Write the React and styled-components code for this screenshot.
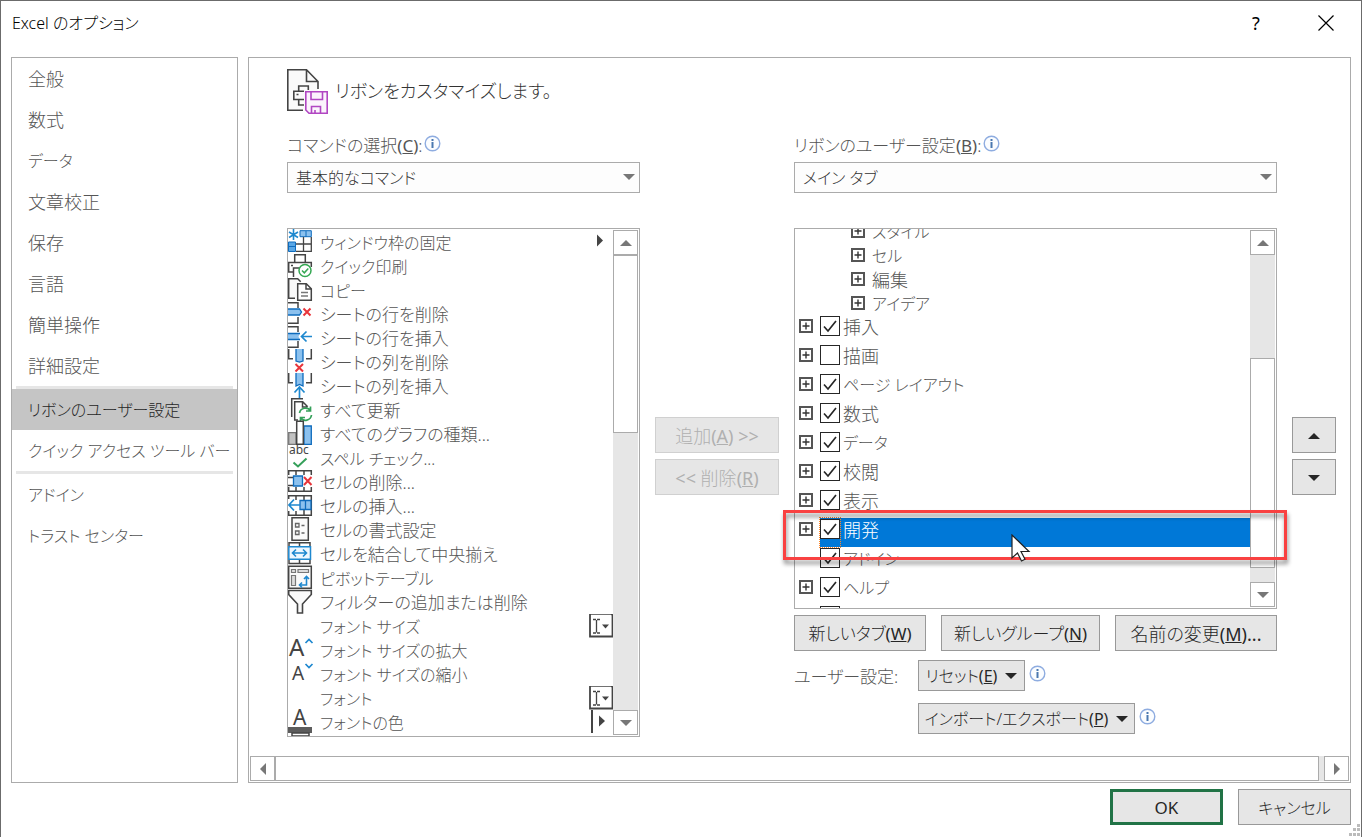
import React from "react";
import styled, { createGlobalStyle, css } from "styled-components";

const GlobalStyle = createGlobalStyle`
  *, *::before, *::after { box-sizing: border-box; }
  body {
    margin: 0;
    background: #fff;
    color: #555;
    font-family: "Noto Sans", "Noto Sans CJK JP", sans-serif;
    font-size: 17px;
    font-weight: 300;
    line-height: 26px;
    font-feature-settings: "palt";
  }
  button, select, input { font: inherit; font-feature-settings: inherit; margin: 0; }
  ul { list-style: none; margin: 0; padding: 0; }
  svg { display: block; flex: none; }
`;

const Dialog = styled.div`
  position: relative;
  display: flex;
  flex-direction: column;
  min-height: 100vh;
  padding: 0 10px 12px;
  border: 1px solid #6b6b6b;
  border-bottom: 0;
`;

const TitleBar = styled.header`
  display: flex;
  align-items: center;
  height: 56px;
  padding: 0 13px 12px 1px;
  color: #000;
`;

const Title = styled.h1`
  flex: 1;
  margin: 0;
  font-size: 16px;
  font-weight: 300;
`;

const TitleButton = styled.button`
  display: grid;
  place-items: center;
  width: 24px;
  height: 32px;
  margin-left: 46px;
  padding: 0;
  border: 0;
  background: none;
  color: #000;
  font-size: 18px;
  font-weight: 400;
`;

const Body = styled.div`
  display: flex;
  flex: 1;
  gap: 10px;
`;

const Nav = styled.nav`
  flex: none;
  width: 227px;
  border: 1px solid #ababab;
`;

const NavLink = styled.a`
  display: block;
  padding: 8px 0 7px 16px;
  color: ${(p) => (p.$active ? "#262626" : "#555")};
  background: ${(p) => (p.$active ? "#c5c5c5" : "none")};
  font-size: ${(p) => p.$size}px;
  text-decoration: none;
  white-space: nowrap;
`;

const NavDivider = styled.hr`
  height: 3px;
  margin: 0 4px;
  border: 0;
  background: #e6e6e6;
`;

const Panel = styled.main`
  display: flex;
  flex: 1;
  flex-direction: column;
  min-width: 0;
  padding: 0 1px 1px;
  border: 1px solid #ababab;
`;

const PanelContent = styled.div`
  flex: 1;
  padding: 10px 13px 19px 37px;
`;

const Heading = styled.div`
  display: flex;
  align-items: center;
  gap: 7px;
  height: 46px;
`;

const HeadingText = styled.h2`
  margin: 0;
  color: #333;
  font-size: 18px;
  font-weight: 300;
`;

const Columns = styled.div`
  display: grid;
  grid-template-columns: minmax(0, 353fr) 124px minmax(0, 483fr) 44px;
  gap: 15px;
  margin-top: 18px;
`;

const Column = styled.div`
  display: flex;
  flex-direction: column;
`;

const SideButtons = styled(Column)`
  gap: 6px;
  padding-top: 285px;
`;

const FieldLabel = styled.div`
  display: flex;
  gap: 2px;
  height: 30px;
  padding-top: 2px;
  line-height: 24px;

  svg { margin-top: 1px; }
`;

const SelectBox = styled.div`
  position: relative;
  height: 31px;
  margin-bottom: 35px;

  svg {
    position: absolute;
    top: 12px;
    right: 5px;
    pointer-events: none;
  }
`;

const Select = styled.select`
  width: 100%;
  height: 31px;
  padding: 1px 24px 0 8px;
  appearance: none;
  border: 1px solid #ababab;
  border-radius: 0;
  background: #fdfdfd;
  color: #333;
  font-size: 16px;
`;

const ListFrame = styled.div`
  position: relative;
  display: flex;
  height: ${(p) => p.$height}px;
  padding: 1px;
  border: 1px solid #ababab;
`;

const ListClip = styled.div`
  flex: 1;
  min-width: 0;
  margin: -1px 0 -1px -1px;
  overflow: hidden;
`;

const CommandList = styled.ul`
  padding-top: 1px;
`;

const CommandRow = styled.li`
  display: flex;
  height: 24px;
  font-size: ${(p) => p.$size}px;
  white-space: nowrap;
`;

const CommandIcon = styled.span`
  width: 24px;
  height: 24px;
  margin-right: 8px;

  svg { overflow: visible; }
`;

const CommandName = styled.span`
  flex: 1;
`;

const Scrollbar = styled.div`
  display: flex;
  flex-direction: ${(p) => (p.$horizontal ? "row" : "column")};
  flex: none;
  ${(p) => (p.$horizontal ? "height: 25px;" : "width: 25px;")}
  background: #e6e6e6;
`;

const ScrollButton = styled.button`
  display: grid;
  place-items: center;
  flex: none;
  width: 25px;
  height: 25px;
  padding: 0;
  border: 1px solid #ababab;
  background: #fff;
`;

const ScrollThumb = styled.div`
  flex: ${(p) => p.$size} 1 0;
  border: 1px solid #ababab;
  background: #fff;
`;

const ScrollSpace = styled.div`
  flex: ${(p) => p.$size} 1 0;
`;

const Button = styled.button`
  display: flex;
  align-items: center;
  justify-content: center;
  flex: none;
  gap: 8px;
  width: ${(p) => p.$width || "auto"};
  height: ${(p) => (p.$compact ? 31 : 36)}px;
  padding: 1px 0 0;
  border: 1px solid #999;
  background: #e6e6e6;
  color: #262626;
  font-size: ${(p) => p.$size || 17}px;
  white-space: nowrap;

  &:disabled {
    border-color: #d0d0d0;
    color: #b0b0b0;
  }

  ${(p) =>
    p.$primary &&
    css`
      border: 3px solid #217346;
    `}
`;

const Latin = styled.span`
  font-weight: 400;
`;

const SubRow = styled.li`
  display: flex;
  align-items: center;
  gap: 7px;
  height: 24px;
  padding: 0 0 0 56px;
  font-size: ${(p) => p.$size}px;
`;

const SubName = styled.span`
  padding-top: 2px;
`;

const TreeList = styled.ul`
  margin-top: -10px;
`;

const TreeRow = styled.li`
  display: flex;
  height: 29px;
  padding-left: 4px;
  font-size: ${(p) => p.$size}px;
  line-height: 24px;
`;

const Expander = styled.button`
  display: block;
  width: 14px;
  height: 14px;
  margin-top: ${(p) => (p.$top ? 4 : 0)}px;
  padding: 0;
  border: 2px solid #555;
  background: #fff;
  visibility: ${(p) => (p.$hidden ? "hidden" : "visible")};
`;

const TabLabel = styled.label`
  display: flex;
  flex: 1;
  gap: 3px;
  margin-left: 7px;
  background: ${(p) => (p.$selected ? "#0078d7" : "none")};
  color: ${(p) => (p.$selected ? "#fff" : "#555")};
`;

const CheckCell = styled.span`
  display: grid;
  align-content: start;
  width: 20px;
  padding-top: 1px;
  outline: ${(p) => (p.$selected ? "1px dotted #ff8728" : "none")};

  input, svg { grid-area: 1 / 1; }
  svg { visibility: hidden; pointer-events: none; }
  input:checked + svg { visibility: visible; }
`;

const Checkbox = styled.input`
  width: 20px;
  height: 20px;
  appearance: none;
  border: 1px solid #262626;
  background: #fff;
`;

const Callout = styled.div`
  position: absolute;
  top: 281px;
  right: -11px;
  left: -12px;
  height: 50px;
  border: 3px solid #f94141;
  filter: drop-shadow(1px 4px 2px rgba(0, 0, 0, 0.45));
  pointer-events: none;
`;

const Pointer = styled.svg`
  position: absolute;
  top: 305px;
  left: 45%;
  pointer-events: none;
`;

const ButtonRow = styled.div`
  display: flex;
  justify-content: space-between;
  margin-top: 6px;
`;

const Customizations = styled.div`
  display: grid;
  grid-template-columns: 109px 1fr;
  gap: 12px 15px;
  margin-top: 9px;
`;

const CustomLabel = styled.span`
  align-self: center;
  padding-top: 2px;
  white-space: nowrap;
`;

const WithInfo = styled.div`
  display: flex;
  gap: 4px;

  > svg { margin-top: 5px; }
`;

const Footer = styled.footer`
  display: flex;
  justify-content: flex-end;
  gap: 15px;
  padding-top: 6px;
`;

const Grip = styled.svg`
  position: absolute;
  right: 1px;
  bottom: 1px;
`;

function textSize(text) {
  const katakana = (text.match(/[ァ-ヺー]/g) || []).length / (text.length || 1);
  if (!/[ぁ-ヺー]/.test(text)) return 18;
  return katakana > 0.5 ? 16 : 17;
}

function Triangle({ dir = "down", color = "#777", w = 12, h = 6 }) {
  const shapes = {
    down: `0,0 ${w},0 ${w / 2},${h}`,
    up: `0,${h} ${w},${h} ${w / 2},0`,
    right: `0,0 ${w},${h / 2} 0,${h}`,
    left: `${w},0 ${w},${h} 0,${h / 2}`,
  };
  return (
    <svg width={w} height={h} aria-hidden="true">
      <polygon points={shapes[dir]} fill={color} />
    </svg>
  );
}

function Info() {
  return (
    <svg width="17" height="17" viewBox="0 0 17 17" aria-hidden="true">
      <circle cx="8.5" cy="8.5" r="7.3" fill="#fbfdff" stroke="#8eace0" strokeWidth="1.400" />
      <path d="M7.500 4h2v2h-2zM7.500 7h2v6h-2z" fill="#4a78b0" />
    </svg>
  );
}

const D = "#444";
const B = "#1e88cf";
const L = "#8cc1ee";

const drawings = {
  freeze: (
    <>
      <path d="M12 .7h11.3v6H12z" fill={L} stroke="#0f6cbd" />
      <path d="M.5 12h7v9.500h-7z" fill="#5aa7e6" stroke="#0f6cbd" />
      <path d="M.5 16.500h7M18 1v6" stroke="#0f6cbd" />
      <path d="M8 21.300h15.300V7M8 14h15M15.500 7v14" fill="none" stroke={D} strokeWidth="1.300" />
      <path d="M5.500-1v11M1 2l9 5.500M10 2 1 7.500" stroke={B} strokeWidth="1.600" />
    </>
  ),
  print: (
    <>
      <path d="M6.700 8V.7h10.600V8M5 18H.7V8.500h22.600V13M3 11.500h2M5.500 23v-9H12" fill="none" stroke={D} strokeWidth="1.500" />
      <circle cx="17" cy="16.500" r="6" fill="#fff" stroke="#35a853" strokeWidth="1.500" />
      <path d="m14 16.500 2.300 2.300 4-4.300" fill="none" stroke="#35a853" strokeWidth="1.500" />
    </>
  ),
  copy: (
    <>
      <path d="M7 20.300H.7V.7h9l3 3" fill="#fafafa" stroke={D} strokeWidth="1.500" />
      <path d="M9.700 5.700h8.600l5 5v11.600H9.700zM18 5.700V11h5" fill="#fff" stroke={D} strokeWidth="1.500" />
      <path d="M13 14.500h7M13 18h7" stroke="#777" strokeWidth="1.300" />
    </>
  ),
  rowDelete: (
    <>
      <path d="M0 .7h10V6M0 21.300h10V15" fill="none" stroke={D} strokeWidth="1.500" />
      <path d="M0 7h11.500l2 3-2 3H0z" fill={L} />
      <path d="M0 7h11.500l2 3-2 3H0" fill="none" stroke="#0f6cbd" strokeWidth="1.300" />
      <path d="m15.500 6.500 7 7m0-7-7 7" stroke="#e8353b" strokeWidth="2" />
    </>
  ),
  rowInsert: (
    <>
      <path d="M0 .7h10V6M0 21.300h10V15" fill="none" stroke={D} strokeWidth="1.500" />
      <path d="M0 7h12l-1.500 3.500L12 14H0z" fill={L} />
      <path d="M0 7.500h12M0 13.500h12" stroke="#0f6cbd" strokeWidth="1.300" />
      <path d="M24 10.500H14m4.500-5-5 5 5 5" fill="none" stroke={B} strokeWidth="1.700" />
    </>
  ),
  colDelete: (
    <>
      <path d="M.7-1v9.700H5M23.300-1v9.700H18" fill="none" stroke={D} strokeWidth="1.500" />
      <path d="M8-1v12l3.500 1 3.500-1V-1" fill={L} stroke="#0f6cbd" strokeWidth="1.300" />
      <path d="m7.500 14 7.500 7.500m0-7.500-7.500 7.500" stroke="#e8353b" strokeWidth="2" />
    </>
  ),
  colInsert: (
    <>
      <path d="M.7-1v9.700H5M23.300-1v9.700H18" fill="none" stroke={D} strokeWidth="1.500" />
      <path d="M8-1v13l3.500-1.500L15 12V-1" fill={L} stroke="#0f6cbd" strokeWidth="1.300" />
      <path d="M11.500 24V13m-5 5.500 5-5.500 5 5.500" fill="none" stroke={B} strokeWidth="1.700" />
    </>
  ),
  refresh: (
    <>
      <path d="M3.700 19V.7H15" fill="none" stroke={D} strokeWidth="1.500" />
      <path d="M10 22H6.700V3.700h8l5 5M14.500 4v5h5" fill="none" stroke={D} strokeWidth="1.500" />
      <path d="M11.500 15a6 6 0 0 1 11-2M22.500 8.500V13H18M23.500 17a6 6 0 0 1-11 2.500M12.500 24v-4.500H17" fill="none" stroke="#35a05a" strokeWidth="1.700" />
    </>
  ),
  chart: (
    <>
      <path d="M.7 10.700H8v11.600H.7z" fill="#c2c2c2" stroke="#777" strokeWidth="1.300" />
      <path d="M16 4h7.300v18.300H16z" fill={L} stroke="#0f6cbd" strokeWidth="1.300" />
      <path d="M8.700-.7h6.600v23H8.700z" fill="#fff" stroke={D} strokeWidth="1.500" />
    </>
  ),
  spell: (
    <>
      <text x="1" y="8" fontSize="12" fontWeight="400" fill={D}>abc</text>
      <path d="m5.500 16.500 4.500 4 8.500-8" fill="none" stroke="#35a05a" strokeWidth="2" />
    </>
  ),
  cellDelete: (
    <>
      <path d="M.7 5V.7h22.600V5M8 1v4M16 1v4M.7 17v4.300h22.600V17M8 17v4M16 17v4" fill="none" stroke={D} strokeWidth="1.500" />
      <path d="M0 7.500h5M0 15.500h5" stroke={D} strokeWidth="1.500" />
      <path d="M5.500 6h9v10h-9z" fill={L} stroke="#0f6cbd" strokeWidth="1.300" />
      <path d="m16 7 7.500 8m0-8L16 15" stroke="#e8353b" strokeWidth="2" />
    </>
  ),
  cellInsert: (
    <>
      <path d="M.7 5V1.700h22.600V21.300H.7V17M8 2v4M16 2v20M8 17v4" fill="none" stroke={D} strokeWidth="1.500" />
      <path d="M12 6.500h11v9H12zM17.500 6.500v9" fill={L} stroke="#0f6cbd" strokeWidth="1.300" />
      <path d="M12 11H1m5-5.500L1 11l5 5.500" fill="none" stroke={B} strokeWidth="1.700" />
    </>
  ),
  format: (
    <>
      <path d="M4-.3h16.300v22.600H4z" fill="#fafafa" stroke={D} strokeWidth="1.500" />
      <path d="M7.500 5.500h3.500V9H7.500zM7.500 13h3.500v3.500H7.500zM13.500 7.500h3M13.500 15h3" fill="none" stroke="#666" strokeWidth="1.300" />
    </>
  ),
  merge: (
    <>
      <path d="M1 4V.7h21V4M11.500 0v4M1 18v3.500h21V18M11.500 18v4" fill="none" stroke={D} strokeWidth="1.500" />
      <path d="M.8 4.800h21.700v12.400H.8z" fill="#eef7ff" stroke={B} strokeWidth="1.500" />
      <path d="M4.500 11h14M8 7.500 4.500 11 8 14.500M15 7.500l3.500 3.500-3.500 3.500" fill="none" stroke={B} strokeWidth="1.600" />
    </>
  ),
  pivot: (
    <>
      <path d="M.7.2h22.600v22H.7z" fill="#fafafa" stroke={D} strokeWidth="1.500" />
      <path d="M3.500 3.500h4v3h-4zM10 3.500h10.500v3H10zM3.500 9.500h4v10h-4z" fill="#ddd" stroke="#777" strokeWidth="1.200" />
      <path d="M12 19h6.500v-8M14 16.500 11.500 19l2.500 2.500M16 13l2.500-2.500L21 13" fill="none" stroke={B} strokeWidth="1.600" />
    </>
  ),
  filter: (
    <path d="M.7.500h22.600v4L14.500 14v9h-5v-9L.7 4.500z" fill="#fafafa" stroke={D} strokeWidth="1.600" />
  ),
  grow: (
    <>
      <text x="1" y="18" fontSize="24" fontWeight="400" fill={D}>A</text>
      <path d="m17.500 5 3.500-3.500L24.500 5" fill="none" stroke={B} strokeWidth="1.700" />
    </>
  ),
  shrink: (
    <>
      <text x="4" y="18" fontSize="19" fontWeight="400" fill={D}>A</text>
      <path d="m17.500 2 3.500 3.500L24.500 2" fill="none" stroke={B} strokeWidth="1.700" />
    </>
  ),
  color: (
    <>
      <text x="5" y="15" fontSize="21" fontWeight="400" fill={D}>A</text>
      <path d="M0 17h24v6H0z" fill="#5c5c5c" />
      <path d="M4 23h17v3H4z" fill="#fff" stroke={D} strokeWidth="1.500" />
    </>
  ),
};

function FieldBadge() {
  return (
    <svg width="24" height="24" viewBox="0 0 24 24" aria-hidden="true">
      <path d="M1-.2h21L23.500 1v21.500H1z" fill="#fff" stroke={D} strokeWidth="1.800" />
      <path d="M4 5.500h3M8 5.500h3M7.500 6v12.500M4 19h3M8 19h3" stroke={D} strokeWidth="1.300" />
      <path d="M13 10.500h7l-3.500 4z" fill={D} />
    </svg>
  );
}

function SplitBadge() {
  return (
    <svg width="24" height="24" viewBox="0 0 24 24" aria-hidden="true">
      <path d="M3-1v24" stroke={D} strokeWidth="2" />
      <path d="m10 5.500 6 5.500-6 5.500z" fill={D} />
    </svg>
  );
}

function MenuBadge() {
  return (
    <svg width="24" height="24" viewBox="0 0 24 24" aria-hidden="true">
      <path d="m8 4.500 6 6-6 6z" fill={D} />
    </svg>
  );
}

const badges = { field: <FieldBadge />, split: <SplitBadge />, menu: <MenuBadge /> };

const commands = [
  ["freeze", "ウィンドウ枠の固定", "menu"],
  ["print", "クイック印刷"],
  ["copy", "コピー"],
  ["rowDelete", "シートの行を削除"],
  ["rowInsert", "シートの行を挿入"],
  ["colDelete", "シートの列を削除"],
  ["colInsert", "シートの列を挿入"],
  ["refresh", "すべて更新"],
  ["chart", "すべてのグラフの種類..."],
  ["spell", "スペル チェック..."],
  ["cellDelete", "セルの削除..."],
  ["cellInsert", "セルの挿入..."],
  ["format", "セルの書式設定"],
  ["merge", "セルを結合して中央揃え"],
  ["pivot", "ピボットテーブル"],
  ["filter", "フィルターの追加または削除"],
  [null, "フォント サイズ", "field"],
  ["grow", "フォント サイズの拡大"],
  ["shrink", "フォント サイズの縮小"],
  [null, "フォント", "field"],
  ["color", "フォントの色", "split"],
];

const groups = ["スタイル", "セル", "編集", "アイデア"];

const tabs = [
  { name: "挿入", checked: true },
  { name: "描画", checked: false },
  { name: "ページ レイアウト", checked: true },
  { name: "数式", checked: true },
  { name: "データ", checked: true },
  { name: "校閲", checked: true },
  { name: "表示", checked: true },
  { name: "開発", checked: true, selected: true },
  { name: "アドイン", checked: true, leaf: true },
  { name: "ヘルプ", checked: true },
  { name: "", checked: true, leaf: true },
];

const navGroups = [
  ["全般", "数式", "データ", "文章校正", "保存", "言語", "簡単操作", "詳細設定"],
  ["リボンのユーザー設定", "クイック アクセス ツール バー"],
  ["アドイン", "トラスト センター"],
];

function Access({ letter }) {
  return <Latin>(<u>{letter}</u>)</Latin>;
}

function PlusButton({ top, hidden, name }) {
  return (
    <Expander type="button" $top={top} $hidden={hidden} aria-label={`${name}を展開`}>
      <svg width="10" height="10" viewBox="0 0 10 10" aria-hidden="true">
        <path d="M1.500 5h7M5 1.500v7" stroke="#333" strokeWidth="1.400" />
      </svg>
    </Expander>
  );
}

function VerticalScroll({ before, thumb, after }) {
  return (
    <Scrollbar>
      <ScrollButton type="button" aria-label="上へスクロール"><Triangle dir="up" /></ScrollButton>
      {before > 0 && <ScrollSpace $size={before} />}
      <ScrollThumb $size={thumb} />
      <ScrollSpace $size={after} />
      <ScrollButton type="button" aria-label="下へスクロール"><Triangle /></ScrollButton>
    </Scrollbar>
  );
}

function Picker({ id, label, accessKey, value }) {
  return (
    <>
      <FieldLabel>
        <label htmlFor={id}>{label}<Access letter={accessKey} />:</label>
        <Info />
      </FieldLabel>
      <SelectBox>
        <Select id={id} defaultValue={value}>
          <option>{value}</option>
        </Select>
        <Triangle />
      </SelectBox>
    </>
  );
}

function RibbonIcon() {
  return (
    <svg width="41" height="46" viewBox="0 0 41 46" aria-hidden="true">
      <path d="M1 1.800h18.500L31 13v30H1z" fill="#fafafa" />
      <path d="M16 42.200H.8V1.800h18.700L31 13.500V21M19.500 2v11.500H31" fill="none" stroke={D} strokeWidth="1.600" />
      <path d="M17 31.500H6.800v-8.300H17M11.700 23v-5h9.600v4M11.700 31.500V37H17M9.500 26.500h2" fill="none" stroke={D} strokeWidth="1.600" />
      <path d="M18.800 23.800h21.400v21.400H22l-3.200-3.200z" fill="#fbf3fc" stroke="#b146c2" strokeWidth="1.600" />
      <path d="M24 24v7.500h11.500V24M24.500 45v-6.500h9V45M28 42v3" fill="none" stroke="#b146c2" strokeWidth="1.600" />
    </svg>
  );
}

export default function App() {
  return (
    <>
      <GlobalStyle />
      <Dialog role="dialog" aria-labelledby="dialog-title">
        <TitleBar>
          <Title id="dialog-title">Excel のオプション</Title>
          <TitleButton type="button">?</TitleButton>
          <TitleButton type="button" aria-label="閉じる">
            <svg width="16" height="16" viewBox="0 0 16 16" aria-hidden="true">
              <path d="m.5.5 15 15m0-15-15 15" stroke="#000" strokeWidth="1.200" />
            </svg>
          </TitleButton>
        </TitleBar>

        <Body>
          <Nav aria-label="オプションの分類">
            {navGroups.map((items, index) => (
              <React.Fragment key={items[0]}>
                {index > 0 && <NavDivider />}
                {items.map((item) => (
                  <NavLink key={item} href="#" $size={textSize(item)} $active={item === "リボンのユーザー設定"}>
                    {item}
                  </NavLink>
                ))}
              </React.Fragment>
            ))}
          </Nav>

          <Panel>
            <PanelContent>
              <Heading>
                <RibbonIcon />
                <HeadingText>リボンをカスタマイズします。</HeadingText>
              </Heading>

              <Columns>
                <Column>
                  <Picker id="commands" label="コマンドの選択" accessKey="C" value="基本的なコマンド" />
                  <ListFrame $height={509}>
                    <ListClip>
                      <CommandList>
                        {commands.map(([icon, name, badge]) => (
                          <CommandRow key={name} $size={textSize(name)}>
                            <CommandIcon>
                              {icon && (
                                <svg width="24" height="24" viewBox="0 0 24 24" aria-hidden="true">
                                  {drawings[icon]}
                                </svg>
                              )}
                            </CommandIcon>
                            <CommandName>{name}</CommandName>
                            {badge && badges[badge]}
                          </CommandRow>
                        ))}
                      </CommandList>
                    </ListClip>
                    <VerticalScroll before={0} thumb={177} after={278} />
                  </ListFrame>
                </Column>

                <SideButtons>
                  <Button type="button" disabled $size={18}><span>追加<Access letter="A" /> <Latin>&gt;&gt;</Latin></span></Button>
                  <Button type="button" disabled $size={18}><span><Latin>&lt;&lt;</Latin> 削除<Access letter="R" /></span></Button>
                </SideButtons>

                <Column>
                  <Picker id="ribbon" label="リボンのユーザー設定" accessKey="B" value="メイン タブ" />
                  <ListFrame $height={381}>
                    <ListClip>
                      <TreeList>
                        {groups.map((name) => (
                          <SubRow key={name} $size={textSize(name)}>
                            <PlusButton name={name} />
                            <SubName>{name}</SubName>
                          </SubRow>
                        ))}
                        {tabs.map(({ name, checked, selected, leaf }) => (
                          <TreeRow key={name} $size={textSize(name)}>
                            <PlusButton top hidden={leaf} name={name} />
                            <TabLabel $selected={selected}>
                              <CheckCell $selected={selected}>
                                <Checkbox type="checkbox" defaultChecked={checked} />
                                <svg width="20" height="20" viewBox="0 0 20 20" aria-hidden="true">
                                  <path d="m4 10.500 4 4.500 8-10" fill="none" stroke="#262626" strokeWidth="1.700" />
                                </svg>
                              </CheckCell>
                              {name}
                            </TabLabel>
                          </TreeRow>
                        ))}
                      </TreeList>
                    </ListClip>
                    <VerticalScroll before={104} thumb={209} after={14} />
                    <Callout />
                    <Pointer width="20" height="28" viewBox="0 0 20 28" aria-hidden="true">
                      <path d="M1 1v23l5.500-5 4 8 3.500-1.700-4-7.800H18z" fill="#fff" stroke="#222" strokeWidth="1.200" />
                    </Pointer>
                  </ListFrame>

                  <ButtonRow>
                    <Button type="button" $width="132px"><span>新しいタブ<Access letter="W" /></span></Button>
                    <Button type="button" $width="159px"><span>新しいグループ<Access letter="N" /></span></Button>
                    <Button type="button" $width="162px" $size={18}><span>名前の変更<Access letter="M" /><Latin>...</Latin></span></Button>
                  </ButtonRow>

                  <Customizations>
                    <CustomLabel>ユーザー設定:</CustomLabel>
                    <WithInfo>
                      <Button type="button" $compact $width="107px" $size={16}>
                        <span>リセット<Access letter="E" /></span>
                        <Triangle color="#262626" />
                      </Button>
                      <Info />
                    </WithInfo>
                    <span />
                    <WithInfo>
                      <Button type="button" $compact $width="217px" $size={16}>
                        <span>インポート/エクスポート<Access letter="P" /></span>
                        <Triangle color="#262626" />
                      </Button>
                      <Info />
                    </WithInfo>
                  </Customizations>
                </Column>

                <SideButtons>
                  <Button type="button" aria-label="上へ"><Triangle dir="up" color="#262626" /></Button>
                  <Button type="button" aria-label="下へ"><Triangle color="#262626" /></Button>
                </SideButtons>
              </Columns>
            </PanelContent>

            <Scrollbar $horizontal>
              <ScrollButton type="button" aria-label="左へスクロール"><Triangle dir="left" w={6} h={12} /></ScrollButton>
              <ScrollThumb $size={1044} />
              <ScrollSpace $size={5} />
              <ScrollButton type="button" aria-label="右へスクロール"><Triangle dir="right" w={6} h={12} /></ScrollButton>
            </Scrollbar>
          </Panel>
        </Body>

        <Footer>
          <Button type="submit" $primary $width="113px"><Latin>OK</Latin></Button>
          <Button type="button" $width="113px" $size={16}>キャンセル</Button>
        </Footer>

        <Grip width="12" height="12" viewBox="0 0 12 12" aria-hidden="true">
          <path d="M9 0h3v3H9zM5 4h3v3H5zM9 4h3v3H9zM1 9h3v3H1zM5 9h3v3H5zM9 9h3v3H9z" fill="#bbb" />
        </Grip>
      </Dialog>
    </>
  );
}
